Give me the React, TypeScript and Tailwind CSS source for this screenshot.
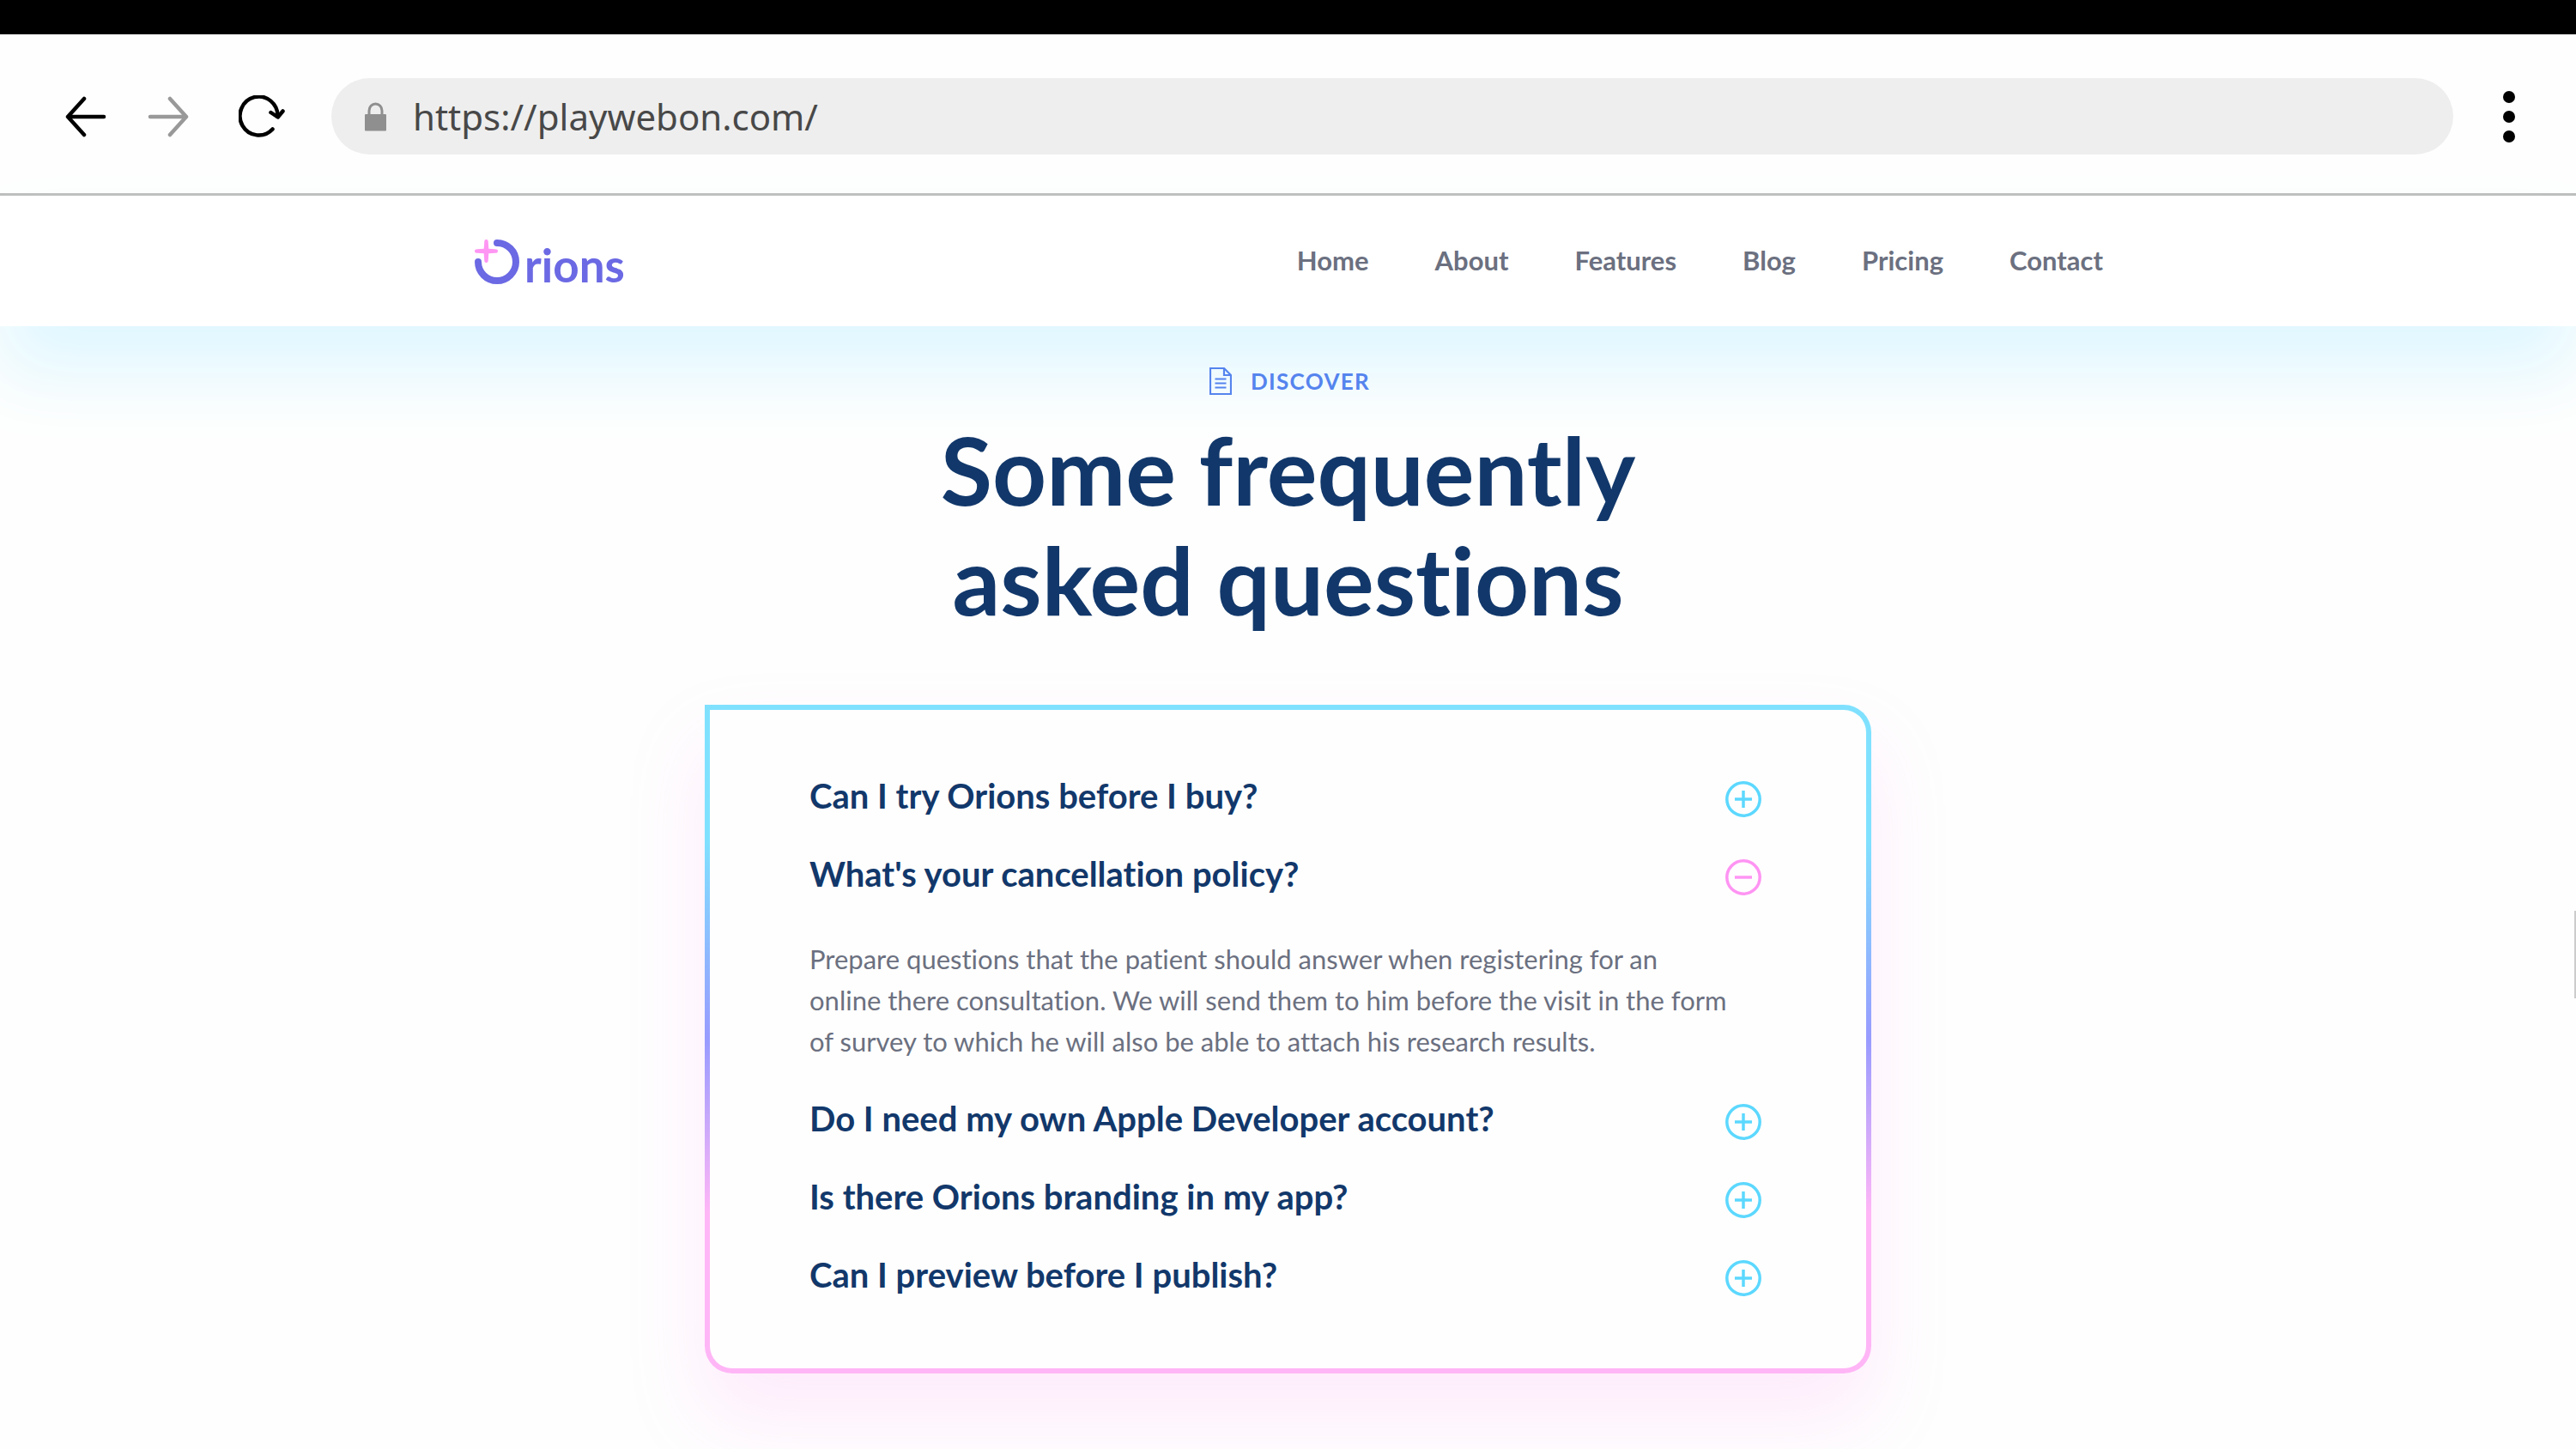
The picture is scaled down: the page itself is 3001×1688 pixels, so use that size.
import { useState } from "react";

const navLinks = ["Home", "About", "Features", "Blog", "Pricing", "Contact"];

const questions = [
  { title: "Can I try Orions before I buy?", answer: "" },
  {
    title: "What's your cancellation policy?",
    answer:
      "Prepare questions that the patient should answer when registering for an online there consultation. We will send them to him before the visit in the form of survey to which he will also be able to attach his research results.",
  },
  { title: "Do I need my own Apple Developer account?", answer: "" },
  { title: "Is there Orions branding in my app?", answer: "" },
  { title: "Can I preview before I publish?", answer: "" },
];

function ArrowIcon({ className }: { className: string }) {
  return (
    <svg viewBox="0 0 48 48" className={className} fill="none" stroke="currentColor" strokeWidth="4.5" strokeLinecap="round" strokeLinejoin="round">
      <path d="M45 24H3M22 3 3 24l19 21" />
    </svg>
  );
}

function ReloadIcon() {
  return (
    <svg viewBox="0 0 54 50" className="h-[50px] w-[54px]" fill="none" stroke="currentColor" strokeWidth="4.5" strokeLinecap="round" strokeLinejoin="round">
      <path d="M39.500 39.500A22 22.500 0 1 1 45.500 25" />
      <path d="M37.500 20 45.700 25.500 51.500 18.500" />
    </svg>
  );
}

function LockIcon() {
  return (
    <svg viewBox="0 0 26 34" className="h-[34px] w-[26px]">
      <path d="M5 16V10a7.500 8 0 0 1 15 0v6" fill="none" stroke="#8f8f8f" strokeWidth="3" />
      <rect x="0" y="14" width="25" height="19.500" rx="1" fill="#8f8f8f" />
    </svg>
  );
}

function BrowserBar() {
  return (
    <div className="flex h-[188px] items-center border-b-3 border-[#bbbbbb] pt-1.5 pr-[71px] pl-[76px]">
      <button type="button" aria-label="Back">
        <ArrowIcon className="size-12 text-black" />
      </button>
      <button type="button" aria-label="Forward" className="ml-12">
        <ArrowIcon className="size-12 rotate-180 text-[#999999]" />
      </button>
      <button type="button" aria-label="Reload" className="ml-[58px]">
        <ReloadIcon />
      </button>
      <label className="ml-[54px] flex h-[89px] min-w-0 flex-1 items-center gap-[30px] rounded-full bg-[#eeeeee] pl-[39px]">
        <LockIcon />
        <input
          type="text"
          aria-label="Address"
          defaultValue="https://playwebon.com/"
          className="min-w-0 flex-1 bg-transparent font-['Noto_Sans',sans-serif] text-[42px] text-[#484848] outline-none"
        />
      </label>
      <button type="button" aria-label="Menu" className="ml-[58px] flex flex-col gap-[9px]">
        <span className="size-3.5 rounded-full bg-black" />
        <span className="size-3.5 rounded-full bg-black" />
        <span className="size-3.5 rounded-full bg-black" />
      </button>
    </div>
  );
}

function Logo() {
  return (
    <a href="#home" aria-label="Orions" className="flex items-end gap-1.5 pt-0.5 pl-0.5">
      <svg viewBox="0 0 52 52" className="size-[52px]" fill="none">
        <path d="M26 4a22 22 0 1 1-22 22" stroke="#6b69e3" strokeWidth="8" strokeLinecap="round" />
        <path
          d="M13.500 0c1.800 0 2.200 1 2.300 3.500l.5 7.200 7.200.5c2.500.1 3.500.5 3.500 2.300s-1 2.200-3.500 2.300l-7.200.5-.5 7.200c-.1 2.500-.5 3.500-2.300 3.500s-2.200-1-2.300-3.500l-.5-7.200-7.200-.5c-2.500-.1-3.500-.5-3.500-2.300s1-2.200 3.500-2.300l7.200-.5.5-7.200c.1-2.500.5-3.500 2.300-3.500z"
          fill="#ff96f3"
        />
      </svg>
      <span className="text-[53px] leading-[44px] font-bold text-[#6b69e3]">rions</span>
    </a>
  );
}

function Header() {
  return (
    <header className="relative bg-white shadow-[0_54px_84px_#dff7ff]">
      <div className="mx-auto flex h-[152px] max-w-[1899px] items-center justify-between">
        <Logo />
        <nav className="flex gap-[77px] pb-0.5">
          {navLinks.map((link) => (
            <a key={link} href={`#${link.toLowerCase()}`} className="text-[31px] leading-10 font-bold text-[#6b7080]">
              {link}
            </a>
          ))}
        </nav>
      </div>
    </header>
  );
}

function DocumentIcon() {
  return (
    <svg viewBox="0 0 26 32" className="h-8 w-[26px]" fill="none" stroke="currentColor" strokeWidth="2.2">
      <path d="M1 1h16l8 8v22H1z" />
      <path d="M17 1v8h8M6.500 13.500h13M6.500 18.500h13M6.500 23.500h13" />
    </svg>
  );
}

function ToggleIcon({ open }: { open: boolean }) {
  return (
    <svg viewBox="0 0 42 42" className={open ? "size-[42px] text-[#ff94f3]" : "size-[42px] text-[#5cd8ff]"} fill="none" stroke="currentColor" strokeWidth="3.500">
      <circle cx="21" cy="21" r="19.200" />
      <path d="M11 21h20" />
      {!open && <path d="M21 11v20" />}
    </svg>
  );
}

function Faq() {
  const [openIndex, setOpenIndex] = useState(1);

  return (
    <div className="mx-auto mt-[83px] max-w-[1359px] rounded-[32px] rounded-tl-none bg-[linear-gradient(#80e1ff_20%,#989bff_50%,#ffb6f6_76%)] p-1.5 shadow-[0_50px_90px_rgba(255,150,243,0.18)]">
      <div className="flex flex-col gap-12 rounded-[26px] rounded-tl-none bg-[#fefefe] pt-[82px] pr-[122px] pb-[84px] pl-[116px]">
        {questions.map((question, index) => {
          const open = index === openIndex;
          return (
            <div key={question.title}>
              <button
                type="button"
                aria-expanded={open}
                onClick={() => setOpenIndex(open ? -1 : index)}
                className="flex h-[43px] w-full items-center justify-between text-left"
              >
                <span className="pb-2 text-[40px] leading-10 font-bold text-[#12386b]">{question.title}</span>
                <ToggleIcon open={open} />
              </button>
              {open && question.answer && (
                <p className="mt-[50px] max-w-[1070px] text-[31px] leading-[48px] text-[#6b7080]">{question.answer}</p>
              )}
            </div>
          );
        })}
      </div>
    </div>
  );
}

function App() {
  return (
    <div className="relative min-h-screen overflow-hidden bg-[#fefefe] font-[Lato,sans-serif] [font-variant-ligatures:none]">
      <div className="h-10 bg-black" />
      <BrowserBar />
      <Header />
      <main className="relative pt-[44px] pb-[87px]">
        <p className="flex items-center justify-center gap-[22px] pl-1 text-[26px] leading-10 font-bold tracking-wider text-[#5584ee]">
          <DocumentIcon />
          DISCOVER
        </p>
        <h1 className="mt-[18px] text-center text-[110px] leading-[128px] font-bold text-[#12386b]">
          Some frequently
          <br />
          asked questions
        </h1>
        <Faq />
      </main>
      {/* page scrollbar thumb */}
      <div className="absolute top-[1061px] right-0 h-[102px] w-0.5 bg-[#cccccc]" />
    </div>
  );
}

export default App;
